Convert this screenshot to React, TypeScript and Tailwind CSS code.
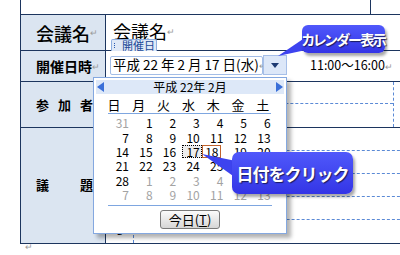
import React from 'react';

type Day = { d: number; muted?: boolean };

const days: Day[] = [
  { d: 31, muted: true },
  ...Array.from({ length: 28 }, (_, i) => ({ d: i + 1 })),
  ...Array.from({ length: 13 }, (_, i) => ({ d: i + 1, muted: true })),
];

const weekdays = ['日', '月', '火', '水', '木', '金', '土'];

const Ret = () => <span className="text-[9px] text-[#9a9a9a] font-normal">↵</span>;

const DayCell = ({ day }: { day: Day }) => {
  if (!day.muted && day.d === 17) {
    return (
      <div className="flex justify-end items-center">
        <span className="w-[20px] h-[13px] border border-dotted border-black bg-[#ededed] text-right pr-[1px] leading-[11px]">17</span>
      </div>
    );
  }
  if (!day.muted && day.d === 18) {
    return (
      <div className="flex justify-end items-center pr-[4px]">
        <span className="w-[19px] h-[13px] border border-[#c0622b] text-center leading-[11px]">18</span>
      </div>
    );
  }
  return (
    <div className={`flex justify-end items-center pr-[2px] ${day.muted ? 'text-[#a3a3a3]' : 'text-black'}`}>
      {day.d}
    </div>
  );
};

const Calendar = () => (
  <div className="absolute left-[93px] top-[77px] w-[194px] h-[157px] bg-white border border-[#84a8e0] shadow-[4px_4px_4px_rgba(0,0,0,0.3)] flex flex-col leading-none">
    {/* month header */}
    <div className="mt-[2px] mx-[2px] h-[14px] bg-[#dde8f8] flex items-center justify-between px-[1px]">
      <svg width="7" height="10" viewBox="0 0 7 10">
        <polygon points="7,0 7,10 0,5" fill="#3a6fd8" />
      </svg>
      <span className="text-[12px]">平成 22年 2月</span>
      <svg width="7" height="10" viewBox="0 0 7 10">
        <polygon points="0,0 0,10 7,5" fill="#3a6fd8" />
      </svg>
    </div>
    {/* weekday names */}
    <div className="mt-[2px] ml-[7.6px] h-[17px] grid grid-cols-[repeat(7,24.8px)] items-center text-[13px]">
      {weekdays.map((w) => (
        <div key={w} className="text-center">{w}</div>
      ))}
    </div>
    <div className="ml-[14px] w-[163px] h-px bg-[#7ea6e0]" />
    {/* days */}
    <div className="mt-[2px] ml-[13.4px] grid grid-cols-[repeat(7,23.6px)] auto-rows-[14.4px] text-[12px]">
      {days.map((day, i) => (
        <DayCell key={i} day={day} />
      ))}
    </div>
    <div className="mt-[3px] ml-[14px] w-[164px] h-px bg-[#7ea6e0]" />
    <button className="mt-[4px] mx-auto w-[60px] h-[19px] rounded-[3px] border border-[#7a7a7a] bg-gradient-to-b from-[#fbfbfb] to-[#d6d6d6] text-[13px] leading-none flex items-center justify-center">
      今日(<span className="underline">T</span>)
    </button>
  </div>
);

export default function App() {
  const line = 'border-[#1c355e]';
  const dash = 'border-dashed border-[#5b8ad6]';
  return (
    <div className="relative w-[400px] h-[255px] overflow-hidden bg-white text-black font-['Noto_Sans_CJK_JP','Noto_Sans',sans-serif]">
      {/* top (previous) row */}
      <div className={`ml-[20px] w-[351px] h-[14px] border-x ${line}`} />

      {/* table */}
      <div className={`ml-[20px] w-[400px] border-l border-t border-b ${line} flex flex-col`}>
        {/* 会議名 */}
        <div className={`flex h-[36px] border-b ${line}`}>
          <div className={`w-[85px] border-r ${line} bg-[#dbe5f1] flex items-center pl-[15px] text-[18px] font-medium leading-none`}>
            会議名<Ret />
          </div>
          <div className="flex-1 flex items-center pl-[7px] pb-[3px] text-[18px] leading-none">
            会議名<Ret />
          </div>
        </div>

        {/* 開催日時 */}
        <div className={`flex h-[31px] border-b ${line}`}>
          <div className={`w-[85px] border-r ${line} bg-[#dbe5f1] flex items-center pl-[15px] text-[14px] font-bold leading-none`}>
            開催日時<Ret />
          </div>
          <div className="flex-1 flex items-center pl-[4px] pb-[2px]">
            <div className="w-[153px] h-[19px] border border-[#a3bde6] rounded-[2px] flex items-center pl-[2px] text-[13.5px] leading-none whitespace-nowrap">
              平成 22 年 2 月 17 日(水)<Ret />
            </div>
            <div className="w-[24px] h-[20px] border border-[#a6bfe8] bg-[#dce7f8] flex items-center justify-center">
              <svg width="8" height="5" viewBox="0 0 8 5">
                <polygon points="0,0 8,0 4,5" fill="#1d3a72" />
              </svg>
            </div>
            <div className="ml-[23px] text-[12.5px] leading-none whitespace-nowrap">
              11:00～16:00<Ret />
            </div>
          </div>
        </div>

        {/* 参加者 */}
        <div className={`flex h-[46px] border-b ${line}`}>
          <div className={`w-[85px] border-r ${line} bg-[#dbe5f1] flex items-center pl-[15px] text-[13px] font-bold leading-none`}>
            <div className="w-[57px] flex justify-between">
              <span>参</span>
              <span>加</span>
              <span>者</span>
            </div>
          </div>
          <div className="flex-1 flex">
            <div className={`w-[288px] border-r ${dash} flex flex-col`}>
              <div className={`h-[22px] border-b ${dash}`} />
              <div className="flex-1" />
            </div>
          </div>
        </div>

        {/* 議題 */}
        <div className="flex h-[115px]">
          <div className={`w-[85px] border-r ${line} bg-[#dbe5f1] flex items-center pl-[15px] pb-[2px] text-[13px] font-bold leading-none`}>
            <div className="w-[57px] flex justify-between">
              <span>議</span>
              <span>題</span>
            </div>
          </div>
          <div className="flex-1 flex flex-col">
            {[1, 2, 3, 4, 5].map((n) => (
              <div key={n} className={`flex h-[23px] ${n < 5 ? `border-b ${dash}` : ''}`}>
                <div className={`w-[28px] border-r ${dash} flex items-center justify-center pb-[3px] text-[12px] leading-none`}>
                  {n === 5 ? '8' : ''}
                </div>
                <div className="flex-1" />
              </div>
            ))}
          </div>
        </div>
      </div>
      <div className="ml-[25px] -mt-[2px] text-[9px] leading-none text-[#9a9a9a]">↵</div>

      {/* content control tag */}
      <div className="absolute left-[111px] top-[39px] w-[46px] h-[12px] border border-b-0 border-[#8eaee0] rounded-t-[2px] bg-[#dfe8f6] flex items-center">
        <div className="ml-[2px] flex flex-col gap-[1px]">
          <span className="w-[1px] h-[1px] bg-[#2a5bb0]" />
          <span className="w-[1px] h-[1px] bg-[#2a5bb0]" />
          <span className="w-[1px] h-[1px] bg-[#2a5bb0]" />
        </div>
        <span className="ml-[7px] text-[11px] leading-none text-[#1a4896]">開催日</span>
      </div>

      <Calendar />

      {/* callout tails */}
      <svg className="absolute left-0 top-0 pointer-events-none" width="400" height="255" viewBox="0 0 400 255">
        <polygon points="306,37 306,50 278,56" fill="#3d43ef" />
        <polygon points="236,161 236,178 202,154" fill="#3d43ef" />
      </svg>

      {/* callouts */}
      <div className="absolute left-[302px] top-[25px] w-[83px] h-[28px] rounded-[6px] bg-gradient-to-b from-[#5058fb] to-[#3434e6] shadow-[2px_3px_3px_rgba(0,0,0,0.35)] flex items-center justify-center">
        <span className="text-white font-bold text-[14px] leading-none tracking-[-1.5px] [font-feature-settings:'palt'] [text-shadow:1px_1px_1px_rgba(0,0,0,0.6)] whitespace-nowrap">
          カレンダー表示
        </span>
      </div>
      <div className="absolute left-[232px] top-[152px] w-[121px] h-[42px] rounded-[7px] bg-gradient-to-b from-[#5058fb] to-[#3434e6] shadow-[2px_3px_3px_rgba(0,0,0,0.35)] flex items-center justify-center">
        <span className="text-white font-bold text-[17px] leading-none tracking-[-1px] [text-shadow:1px_1px_1px_rgba(0,0,0,0.6)] whitespace-nowrap">
          日付をクリック
        </span>
      </div>
    </div>
  );
}
